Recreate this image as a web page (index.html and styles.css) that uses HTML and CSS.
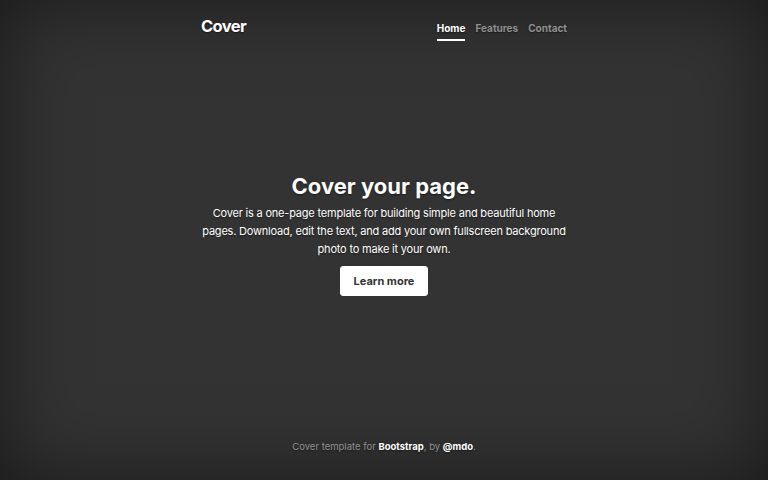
FILE: index.html
```html
<!DOCTYPE html>
<html lang="en">
<head>
<meta charset="utf-8">
<title>Cover</title>
<link rel="stylesheet" href="styles.css">
</head>
<body>
<div class="cover-container">
  <header class="masthead">
    <h3 class="brand">Cover</h3>
    <nav class="nav">
      <a class="nav-link active" href="#">Home</a>
      <a class="nav-link" href="#">Features</a>
      <a class="nav-link" href="#">Contact</a>
    </nav>
  </header>
  <main class="cover">
    <h1 class="cover-heading">Cover your page.</h1>
    <p class="lead">Cover is a one-page template for building simple and beautiful home pages. Download, edit the text, and add your own fullscreen background photo to make it your own.</p>
    <p class="lead"><a href="#" class="btn">Learn more</a></p>
  </main>
  <footer class="mastfoot">
    <p>Cover template for <a href="#">Bootstrap</a>, by <a href="#">@mdo</a>.</p>
  </footer>
</div>
</body>
</html>
```
FILE: styles.css
```css
html, body { height: 100%; }
body {
  margin: 0;
  background: #333;
  color: #fff;
  font-family: Inter, "Liberation Sans", sans-serif;
  font-size: 11px;
  line-height: 1.5;
  text-shadow: 0 0.05rem 0.1rem rgba(0,0,0,.5);
  box-shadow: inset 0 0 5rem rgba(0,0,0,.5);
  display: flex;
}
.cover-container {
  width: 366px;
  margin: 0 auto;
  padding: 12px 0;
  display: flex;
  flex-direction: column;
  box-sizing: border-box;
  height: 100%;
}
.masthead {
  display: flex;
  justify-content: space-between;
  align-items: flex-start;
}
.brand {
  margin: 0;
  font-size: 16.5px;
  font-weight: 700;
  line-height: 1.2;
  padding-top: 5px;
  letter-spacing: -0.6px;
}
.nav { display: flex; gap: 10px; padding-top: 9px; }
.nav-link {
  color: rgba(255,255,255,.5);
  font-weight: 700;
  font-size: 10px;
  text-decoration: none;
  padding: 0 0 4px;
  border-bottom: 2px solid transparent;
  line-height: 14px;
}
.nav-link.active { color: #fff; border-bottom-color: #fff; }
.cover {
  margin: auto 0;
  text-align: center;
  padding-bottom: 4px;
}
.cover-heading {
  margin: 0 0 4px;
  font-size: 22px;
  font-weight: 700;
  line-height: 1.2;
  letter-spacing: 0;
}
.lead { margin: 0 0 8px; font-size: 11px; line-height: 18px; letter-spacing: -0.2px; }
.btn {
  display: inline-block;
  background: #fff;
  color: #333;
  text-shadow: none;
  font-weight: 700;
  text-decoration: none;
  padding: 5px 12px;
  border-radius: 3px;
  line-height: 18px;
  border: 1px solid #fff;
  width: 62px;
  letter-spacing: 0;
}
.mastfoot { color: rgba(255,255,255,.5); text-align: center; font-size: 9.5px; }
.mastfoot p { margin: 0 0 14px; }
.mastfoot a { color: #fff; font-weight: 700; text-decoration: none; }
```
